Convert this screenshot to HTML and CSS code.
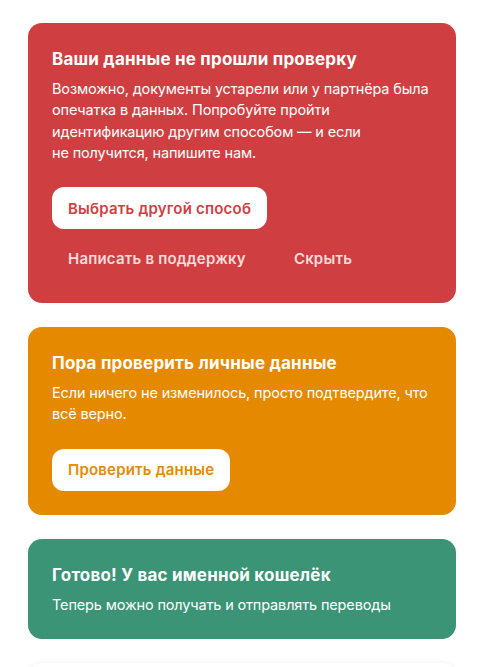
FILE: index.html
```html
<!DOCTYPE html>
<html lang="ru">
<head>
<meta charset="utf-8">
<link rel="stylesheet" href="styles.css">
</head>
<body>
<main class="list">
  <section class="card card--red">
    <h2 class="card__title">Ваши данные не прошли проверку</h2>
    <p class="card__text">Возможно, документы устарели или у партнёра была опечатка в данных. Попробуйте пройти идентификацию другим способом — и если<br>не получится, напишите нам.</p>
    <div class="card__actions">
      <button class="btn btn--primary btn--red">Выбрать другой способ</button>
      <div class="card__links">
        <button class="btn btn--link">Написать в поддержку</button>
        <button class="btn btn--link">Скрыть</button>
      </div>
    </div>
  </section>
  <section class="card card--orange">
    <h2 class="card__title">Пора проверить личные данные</h2>
    <p class="card__text">Если ничего не изменилось, просто подтвердите, что всё верно.</p>
    <div class="card__actions">
      <button class="btn btn--primary btn--orange">Проверить данные</button>
    </div>
  </section>
  <section class="card card--green">
    <h2 class="card__title">Готово! У вас именной кошелёк</h2>
    <p class="card__text">Теперь можно получать и отправлять переводы</p>
  </section>
  <section class="card card--white"></section>
</main>
</body>
</html>
```
FILE: styles.css
```css
* { box-sizing: border-box; }
html, body { margin: 0; padding: 0; background: #fff; }
body {
  font-family: Inter, "Noto Sans", sans-serif;
  color: #fff;
}
.list {
  display: flex;
  flex-direction: column;
  gap: 24px;
  padding: 23px 35px 0 28px;
}
.card {
  border-radius: 14px;
  padding: 24px 24px 24px;
}
.card--red { background: #cf3f42; }
.card--orange { background: #e58900; }
.card--green { background: #3a9475; }
.card--white {
  height: 60px;
  background: #fff;
  box-shadow: 0 0 6px rgba(0,0,0,0.06);
}
.card__title {
  margin: 0 0 7px;
  font-size: 17px;
  line-height: 24px;
  font-weight: 700;
  letter-spacing: 0.2px;
}
.card__text {
  margin: 0;
  font-size: 14.5px;
  line-height: 21.3px;
  font-weight: 400;
  letter-spacing: -0.15px;
}
.card__actions {
  margin-top: 24px;
  display: flex;
  flex-direction: column;
  align-items: flex-start;
  gap: 8px;
}
.card__links {
  display: flex;
  gap: 16px;
}
.btn {
  font-family: inherit;
  border: 0;
  height: 42px;
  padding: 0 16px;
  border-radius: 12px;
  font-size: 15px;
  font-weight: 600;
  letter-spacing: 0.2px;
  cursor: pointer;
}
.btn--primary { background: #fff; }
.btn--red { color: #cf3f42; }
.btn--orange { color: #e58900; }
.btn--link {
  background: transparent;
  color: rgba(255,255,255,0.82);
}
```
